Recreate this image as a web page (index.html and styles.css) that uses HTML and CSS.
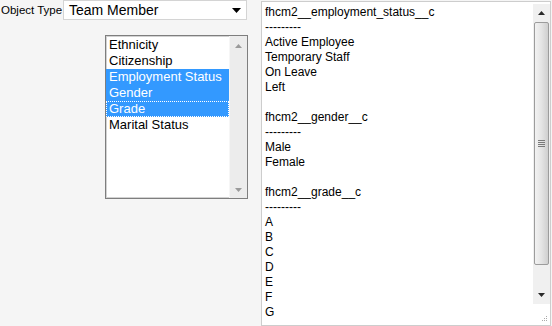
FILE: index.html
```html
<!DOCTYPE html>
<html lang="en">
  <head>
    <meta charset="UTF-8" />
    <title>Picklist Values</title>
    <link rel="stylesheet" href="styles.css">
  </head>
  <body>
    <div class="page">
      <div class="left-col">
        <div class="type-row">
          <label class="type-label">Object Type</label>
          <div class="select-box">
            <span>Team Member</span>
            <svg class="select-arrow" width="9" height="5" viewBox="0 0 9 5"><path d="M0 0h9L4.5 5z" fill="#000"/></svg>
          </div>
        </div>

        <!-- field list -->
        <div class="listbox">
          <ul class="list-items">
            <li>Ethnicity</li>
            <li>Citizenship</li>
            <li class="selected">Employment Status</li>
            <li class="selected">Gender</li>
            <li class="selected focused">Grade</li>
            <li>Marital Status</li>
          </ul>
          <div class="list-scroll">
            <svg width="7" height="4" viewBox="0 0 7 4"><path d="M0 4h7L3.5 0z" fill="#9a9a9a"/></svg>
            <svg width="7" height="4" viewBox="0 0 7 4"><path d="M0 0h7L3.5 4z" fill="#9a9a9a"/></svg>
          </div>
        </div>
      </div>

      <!-- output area -->
      <div class="textbox">
        <div class="text-content">fhcm2__employment_status__c
---------
Active Employee
Temporary Staff
On Leave
Left

fhcm2__gender__c
---------
Male
Female

fhcm2__grade__c
---------
A
B
C
D
E
F
G</div>
        <div class="vscroll">
          <div class="scroll-btn">
            <svg width="7" height="4" viewBox="0 0 7 4"><path d="M0 4h7L3.5 0z" fill="#2a2a2a"/></svg>
          </div>
          <div class="thumb">
            <div class="grip"><i></i><i></i><i></i><i></i></div>
          </div>
          <div class="track"></div>
          <div class="scroll-btn">
            <svg width="7" height="4" viewBox="0 0 7 4"><path d="M0 0h7L3.5 4z" fill="#2a2a2a"/></svg>
          </div>
        </div>
        <svg class="resize-grip" width="6" height="6" viewBox="0 0 6 6">
          <rect x="4" y="0" width="1" height="1" fill="#aaa"/>
          <rect x="2" y="2" width="1" height="1" fill="#aaa"/>
          <rect x="4" y="2" width="1" height="1" fill="#aaa"/>
          <rect x="0" y="4" width="1" height="1" fill="#aaa"/>
          <rect x="2" y="4" width="1" height="1" fill="#aaa"/>
          <rect x="4" y="4" width="1" height="1" fill="#aaa"/>
        </svg>
      </div>
    </div>
  </body>
</html>
```

FILE: styles.css
```css
body {
  margin: 0;
  padding: 0;
  background-color: #f5f5f5;
  font-family: "Liberation Sans", Arial, sans-serif;
  color: #000;
}

.page {
  display: flex;
  align-items: flex-start;
  gap: 13px;
}

.left-col {
  width: 248px;
  display: flex;
  flex-direction: column;
}

.type-row {
  display: flex;
  align-items: flex-start;
}
.type-label {
  font-size: 11.5px;
  width: 63px;
  padding-left: 1px;
  padding-top: 4px;
  box-sizing: border-box;
  white-space: nowrap;
}
.select-box {
  width: 184px;
  height: 20px;
  box-sizing: border-box;
  border: 1px solid #d4d4d4;
  background-color: #fff;
  display: flex;
  align-items: center;
  justify-content: space-between;
  padding: 0 5px 0 5px;
  font-size: 14px;
}
.select-arrow {
  margin-top: 1px;
}

.listbox {
  margin-top: 15px;
  margin-left: 105px;
  width: 143px;
  height: 164px;
  box-sizing: border-box;
  border: 1px solid #7e7e7e;
  box-shadow: inset 0 0 0 1px #d2d2d2;
  background-color: #fff;
  display: flex;
}
.list-items {
  list-style: none;
  margin: 0;
  padding: 1px 0 0 0;
  flex: 1;
  font-size: 13px;
}
.list-items li {
  height: 16px;
  line-height: 16px;
  padding-left: 3px;
  white-space: nowrap;
  box-sizing: border-box;
}
.list-items li.selected {
  background-color: #3399ff;
  color: #fff;
}
.list-items li.focused {
  outline: 1px dotted #fff;
  outline-offset: -1px;
}
.list-scroll {
  width: 17px;
  background-color: #ececec;
  border-left: 1px solid #f6f6f6;
  display: flex;
  flex-direction: column;
  align-items: center;
  justify-content: space-between;
  padding: 8px 0 6px 0;
}

.textbox {
  position: relative;
  margin-top: 1px;
  width: 290px;
  height: 325px;
  box-sizing: border-box;
  border: 1px solid #cdcdcd;
  background-color: #fff;
  display: flex;
}
.text-content {
  flex: 1;
  padding: 3px 0 0 3px;
  font-size: 12px;
  line-height: 15px;
  white-space: pre;
  overflow: hidden;
}
.vscroll {
  width: 17px;
  margin-top: 2px;
  margin-bottom: 21px;
  background-color: #f0f0f0;
  display: flex;
  flex-direction: column;
}
.scroll-btn {
  height: 18px;
  display: flex;
  align-items: center;
  justify-content: center;
}
.thumb {
  height: 243px;
  box-sizing: border-box;
  margin: 0 1px;
  border: 1px solid #9c9c9c;
  border-radius: 2px;
  background: linear-gradient(to right, #f2f2f2, #e4e4e4 50%, #cfcfcf);
  display: flex;
  align-items: center;
  justify-content: center;
}
.grip {
  display: flex;
  flex-direction: column;
  gap: 1px;
}
.grip i {
  display: block;
  width: 7px;
  height: 1px;
  background-color: #7a7a7a;
}
.track {
  flex: 1;
}
.resize-grip {
  position: absolute;
  right: 2px;
  bottom: 3px;
}
```
